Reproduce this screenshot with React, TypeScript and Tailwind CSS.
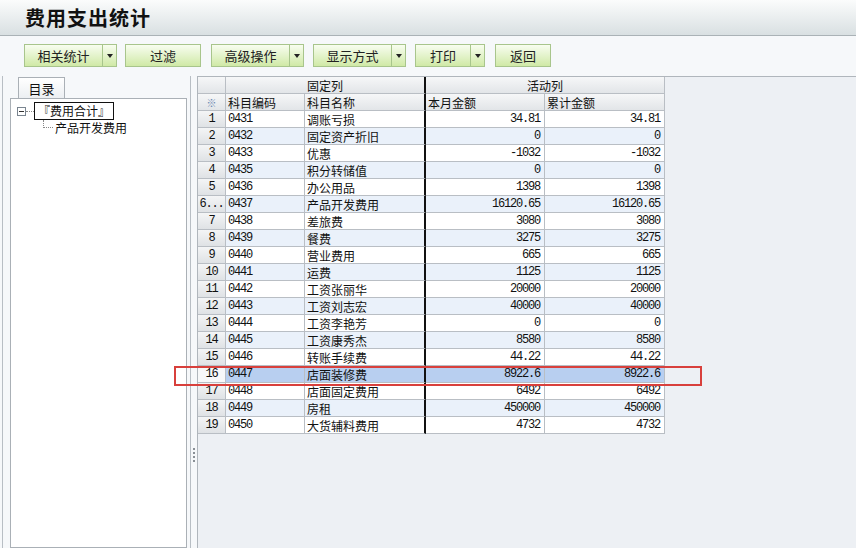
import React from 'react';

// 费用支出统计 — fixed/active column report with directory tree
const rows: [string, string, string, string][] = [
  ['1', '0431', '调账亏损', '34.81'],
  ['2', '0432', '固定资产折旧', '0'],
  ['3', '0433', '优惠', '-1032'],
  ['4', '0435', '积分转储值', '0'],
  ['5', '0436', '办公用品', '1398'],
  ['6...', '0437', '产品开发费用', '16120.65'],
  ['7', '0438', '差旅费', '3080'],
  ['8', '0439', '餐费', '3275'],
  ['9', '0440', '营业费用', '665'],
  ['10', '0441', '运费', '1125'],
  ['11', '0442', '工资张丽华', '20000'],
  ['12', '0443', '工资刘志宏', '40000'],
  ['13', '0444', '工资李艳芳', '0'],
  ['14', '0445', '工资康秀杰', '8580'],
  ['15', '0446', '转账手续费', '44.22'],
  ['16', '0447', '店面装修费', '8922.6'],
  ['17', '0448', '店面固定费用', '6492'],
  ['18', '0449', '房租', '450000'],
  ['19', '0450', '大货辅料费用', '4732'],
];

const cjk = "font-['SimSun','Noto_Sans_CJK_SC',sans-serif]";
const mono = "font-['Liberation_Mono','Noto_Sans_CJK_SC',monospace] text-[12px] tracking-[-1.2px]";
const hdr = 'bg-gradient-to-b from-[#f6f7f8] to-[#e2e5e8]';

const ToolButton = ({ label, w, drop, ml }: { label: string; w: number; drop?: boolean; ml: string }) => (
  <div className={`flex h-[23px] border border-[#a8c58c] bg-gradient-to-b from-[#f8fdf0] to-[#d0e9a6] ${ml}`}>
    <div style={{ width: w }} className="flex items-center justify-center text-[13px] leading-none text-[#222]">
      {label}
    </div>
    {drop && (
      <div className="w-[14px] border-l border-[#a8c58c] flex items-center justify-center">
        <div className="w-0 h-0 border-l-[3px] border-r-[3px] border-t-[4px] border-l-transparent border-r-transparent border-t-[#222]" />
      </div>
    )}
  </div>
);

export default function App() {
  return (
    <div className={`relative w-[856px] h-[548px] overflow-hidden bg-[#f6f8fa] ${cjk}`}>
      {/* Title */}
      <div className="h-[36px] border-b border-[#aab2b6] bg-gradient-to-b from-[#fbfcfc] to-[#d9e0e2] flex items-center pl-[25px]">
        <span className="text-[20px] leading-none font-bold text-[#111] tracking-[1px] font-['Noto_Sans_CJK_SC',sans-serif]">
          费用支出统计
        </span>
      </div>

      {/* Toolbar */}
      <div className="h-[40px] flex items-start pt-[8px] pl-[24px]">
        <ToolButton label="相关统计" w={77} drop ml="" />
        <ToolButton label="过滤" w={74} ml="ml-[8px]" />
        <ToolButton label="高级操作" w={77} drop ml="ml-[10px]" />
        <ToolButton label="显示方式" w={77} drop ml="ml-[9px]" />
        <ToolButton label="打印" w={54} drop ml="ml-[9px]" />
        <ToolButton label="返回" w={54} ml="ml-[10px]" />
      </div>

      {/* Main */}
      <div className="flex h-[472px]">
        {/* Left pane */}
        <div className="w-[189px] border-l border-r border-[#b8bec4] ml-[2px] flex flex-col pl-[7px] pr-[3px]">
          <div className="h-[21px] mt-[1px] flex">
            <div className="ml-[8px] w-[47px] border border-b-0 border-[#aab0b6] bg-gradient-to-b from-[#ffffff] to-[#eceff2] flex items-center justify-center text-[13px] leading-none text-[#111]">
              目录
            </div>
          </div>
          <div className="flex-1 bg-white border border-[#aab0b6] relative">
            {/* tree */}
            <div className="absolute left-[6px] top-[8px] w-[9px] h-[9px] border border-[#7a8590] bg-white flex items-center justify-center">
              <div className="w-[5px] h-px bg-[#333]" />
            </div>
            <div className="absolute left-[15px] top-[12px] w-[8px] border-t border-dotted border-[#888]" />
            <div className="absolute left-[23px] top-[3px] h-[18px] w-[80px] border border-[#111] flex items-center justify-center text-[12px] leading-none text-[#111]">
              『费用合计』
            </div>
            <div className="absolute left-[32px] top-[21px] h-[8px] border-l border-dotted border-[#888]" />
            <div className="absolute left-[32px] top-[28px] w-[10px] border-t border-dotted border-[#888]" />
            <div className="absolute left-[44px] top-[21px] text-[12px] text-[#111] leading-[15px]">产品开发费用</div>
          </div>
        </div>

        {/* Splitter */}
        <div className="w-[6px] relative">
          <div className="absolute left-[2px] top-[372px] flex flex-col gap-[2px]">
            {[0, 1, 2, 3].map((i) => (
              <div key={i} className="w-[2px] h-[2px] bg-[#8a9096]" />
            ))}
          </div>
        </div>

        {/* Grid area */}
        <div className="flex-1 border-l border-t border-[#b0b6bc] bg-[#edf0f4]">
          <div className="w-[469px] text-[12px] leading-[15px] text-[#111]">
            {/* header 1 */}
            <div className="flex h-[17px]">
              <div className={`w-[28px] border-r border-b border-[#b9bec4] ${hdr}`} />
              <div className={`w-[200px] border-r-2 border-r-[#111] border-b border-b-[#b9bec4] flex items-center justify-center ${hdr}`}>
                固定列
              </div>
              <div className={`w-[239px] border-r border-b border-[#b9bec4] flex items-center justify-center ${hdr}`}>
                活动列
              </div>
            </div>
            {/* header 2 */}
            <div className="flex h-[17px]">
              <div className={`w-[28px] border-r border-b border-[#b9bec4] flex items-center justify-center text-[10px] text-[#6a86b0] ${hdr}`}>
                ※
              </div>
              <div className={`w-[79px] border-r border-b border-[#b9bec4] flex items-center pl-[2px] ${hdr}`}>
                科目编码
              </div>
              <div className={`w-[121px] border-r-2 border-r-[#111] border-b border-b-[#b9bec4] flex items-center pl-[2px] ${hdr}`}>
                科目名称
              </div>
              <div className={`w-[119px] border-r border-b border-[#b9bec4] flex items-center pl-[2px] ${hdr}`}>
                本月金额
              </div>
              <div className={`w-[120px] border-r border-b border-[#b9bec4] flex items-center pl-[2px] ${hdr}`}>
                累计金额
              </div>
            </div>
            {/* data */}
            {rows.map(([no, code, name, amt], i) => {
              const sel = no === '16';
              const bg = sel ? 'bg-[#b8cff0]' : i % 2 === 1 ? 'bg-[#eaf1fa]' : 'bg-white';
              return (
                <div key={no} className="flex h-[17px]">
                  <div
                    className={`w-[28px] border-r border-b border-[#b9bec4] flex items-center justify-center ${mono} ${
                      sel ? 'bg-[#f7f8f9]' : 'bg-gradient-to-b from-[#f4f5f6] to-[#dfe2e5]'
                    }`}
                  >
                    {no}
                  </div>
                  <div className={`w-[79px] border-r border-b border-[#b9bec4] flex items-center pl-[2px] ${mono} ${bg}`}>
                    {code}
                  </div>
                  <div className={`w-[121px] border-r-2 border-r-[#111] border-b border-b-[#b9bec4] flex items-center pl-[2px] text-[12px] ${bg}`}>
                    {name}
                  </div>
                  <div className={`w-[119px] border-r border-b border-[#b9bec4] flex items-center justify-end pr-[4px] ${mono} ${bg}`}>
                    {amt}
                  </div>
                  <div className={`w-[120px] border-r border-b border-[#b9bec4] flex items-center justify-end pr-[4px] ${mono} ${bg}`}>
                    {amt}
                  </div>
                </div>
              );
            })}
          </div>
        </div>
      </div>

      {/* highlight marker */}
      <div className="absolute left-[174px] top-[366px] w-[528px] h-[20px] border-2 border-[#d8403c]" />
    </div>
  );
}
